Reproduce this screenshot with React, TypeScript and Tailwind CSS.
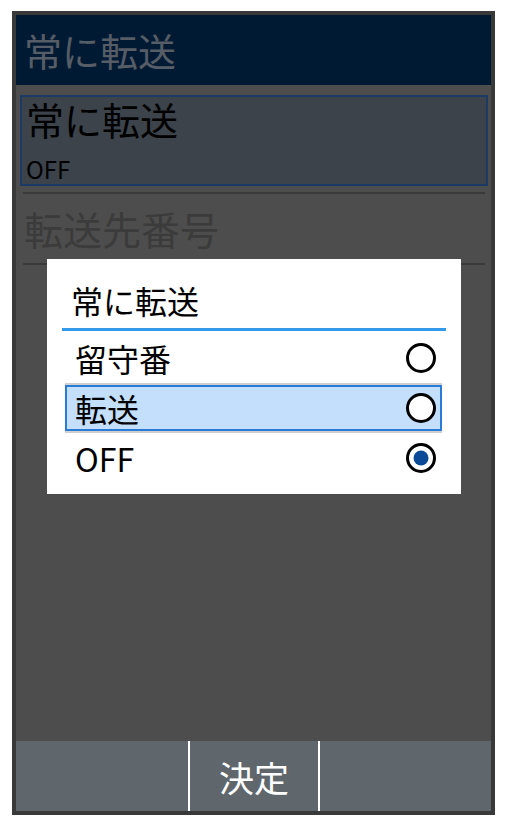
import React from 'react';

const font = { fontFamily: '"Noto Sans CJK JP", "Noto Sans", sans-serif' };

type Option = { label: string; checked: boolean; focused?: boolean };

const options: Option[] = [
  { label: '留守番', checked: false },
  { label: '転送', checked: false, focused: true },
  { label: 'OFF', checked: true },
];

function Radio({ checked }: { checked: boolean }) {
  return (
    <svg width="32" height="32" viewBox="0 0 32 32">
      <circle cx="16" cy="16" r="13.5" fill="white" stroke="black" strokeWidth="3" />
      {checked && <circle cx="16" cy="16" r="7.5" fill="#0b4a96" />}
    </svg>
  );
}

export default function App() {
  return (
    <div className="bg-white w-[507px] h-[826px] pt-[11px] pl-[12px]" style={font}>
      <div className="relative w-[483px] h-[804px] border-4 border-[#393939] bg-[#4d4d4d] flex flex-col">
        {/* title bar */}
        <div className="h-[70px] bg-[#001a33] flex items-center pl-[8px] shrink-0">
          <span className="text-[38px] leading-none text-[#575d66]">常に転送</span>
        </div>

        {/* list */}
        <div className="flex-1 flex flex-col">
          <div className="mt-[10px] ml-[4px] mr-[3px] h-[91px] border-2 border-[#1b3a66] bg-[#3c434b] flex flex-col justify-between pl-[4px] pb-[3px]">
            <span className="text-[38px] leading-none text-black mt-[3px]">常に転送</span>
            <span className="text-[24px] leading-none text-black">OFF</span>
          </div>
          <div className="mt-[6px] ml-[7px] mr-[6px] h-[2px] bg-[#3a3a3a]" />
          <div className="h-[69px] flex items-center pl-[8px]">
            <span className="text-[39px] leading-none text-[#3b3b3b]">転送先番号</span>
          </div>
          <div className="ml-[7px] mr-[6px] h-[2px] bg-[#3a3a3a]" />
        </div>

        {/* soft key bar */}
        <div className="h-[70px] bg-[#5f676d] flex shrink-0">
          <div className="w-[172px]" />
          <div className="w-[2px] bg-white" />
          <div className="w-[128px] flex items-center justify-center">
            <span className="text-[35px] leading-none text-white">決定</span>
          </div>
          <div className="w-[2px] bg-white" />
          <div className="flex-1" />
        </div>

        {/* dialog */}
        <div className="absolute left-[31px] top-[244px] w-[414px] h-[235px] bg-white flex flex-col">
          <div className="h-[69px] flex items-center pl-[24px] pt-[12px]">
            <span className="text-[32px] leading-none text-black">常に転送</span>
          </div>
          <div className="mx-[15px] h-[3px] bg-[#3399ea]" />
          <div className="flex flex-col mt-[2px]">
            {options.map((o) => (
              <div
                key={o.label}
                className={
                  o.focused
                    ? 'ml-[18px] mr-[19px] h-[50px] border-y-2 border-[#cfcfcf] flex'
                    : 'ml-[18px] mr-[19px] h-[50px] flex'
                }
              >
                <div
                  className={
                    o.focused
                      ? 'flex-1 flex items-center justify-between bg-[#c4dffb] border-2 border-[#2a7ad8] pl-[8px] pr-[3px]'
                      : 'flex-1 flex items-center justify-between pl-[10px] pr-[5px]'
                  }
                >
                  <span className="text-[32px] leading-none text-black">{o.label}</span>
                  <Radio checked={o.checked} />
                </div>
              </div>
            ))}
          </div>
        </div>
      </div>
    </div>
  );
}
